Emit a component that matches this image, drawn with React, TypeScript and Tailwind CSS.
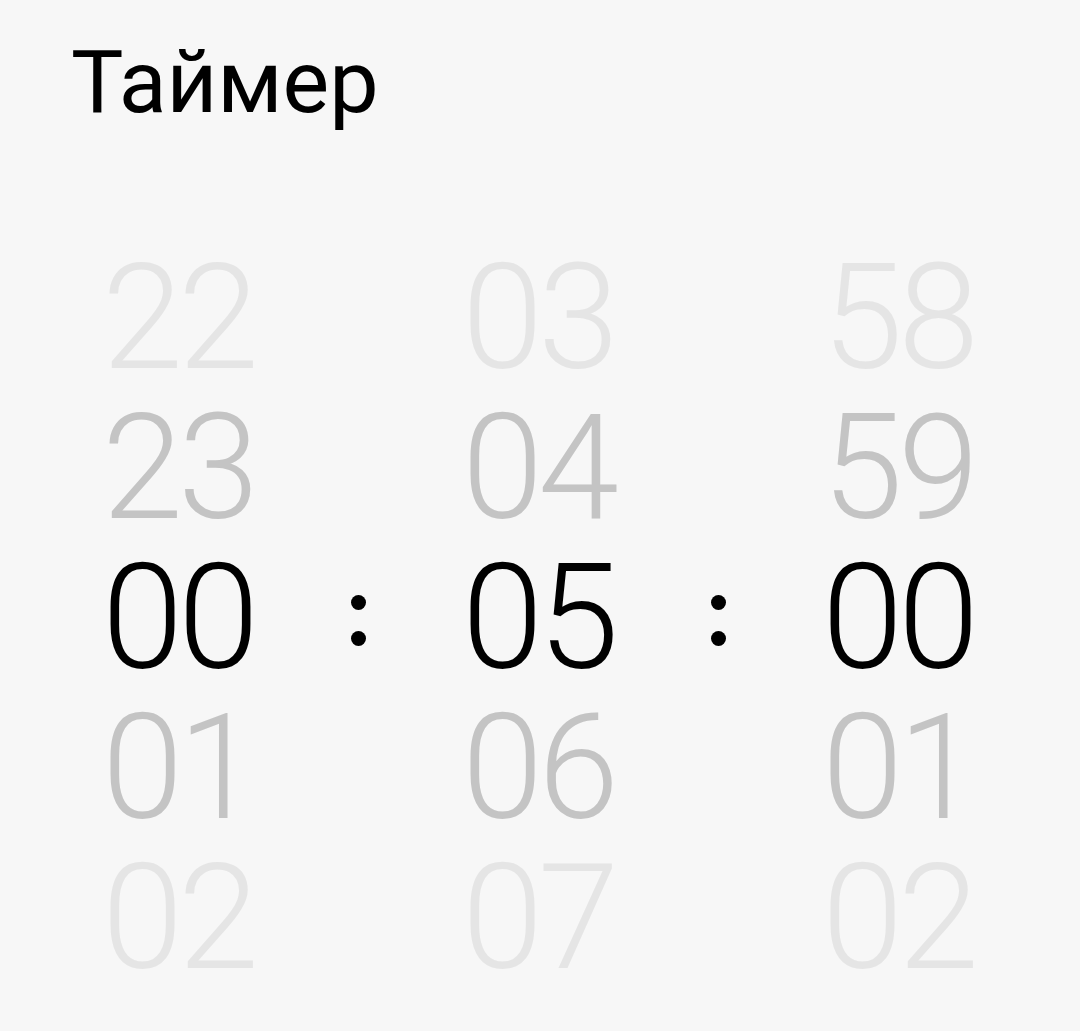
import React from "react";

const cols = [
  ["22", "23", "00", "01", "02"],
  ["03", "04", "05", "06", "07"],
  ["58", "59", "00", "01", "02"],
];

const rowColor = [
  "text-[#e5e5e5]",
  "text-[#c4c4c4]",
  "text-black",
  "text-[#c4c4c4]",
  "text-[#e5e5e5]",
];

function Column({ values }: { values: string[] }) {
  return (
    <div className="flex flex-col items-center">
      {values.map((v, i) => (
        <div
          key={i}
          className={`h-[150px] text-[146px] leading-[150px] tracking-[-5px] font-light ${rowColor[i]}`}
        >
          {v}
        </div>
      ))}
    </div>
  );
}

function Colon() {
  return (
    <div className="flex flex-col items-center">
      <div className="h-[300px]" />
      <div className="h-[150px] flex flex-col items-center justify-center gap-[21px] pt-[2px]">
        <div className="w-[15px] h-[15px] rounded-full bg-black" />
        <div className="w-[15px] h-[15px] rounded-full bg-black" />
      </div>
    </div>
  );
}

export default function App() {
  return (
    <div
      className="w-[1080px] h-[1031px] bg-[#f7f7f7] overflow-hidden"
      style={{ fontFamily: "Roboto, 'Noto Sans', sans-serif" }}
    >
      <div className="pt-[38px] pl-[71px] text-[88px] leading-none text-black font-normal">
        Таймер
      </div>
      <div className="mt-[118px] pl-[88px] grid grid-cols-[repeat(5,180px)]">
        <Column values={cols[0]} />
        <Colon />
        <Column values={cols[1]} />
        <Colon />
        <Column values={cols[2]} />
      </div>
    </div>
  );
}
